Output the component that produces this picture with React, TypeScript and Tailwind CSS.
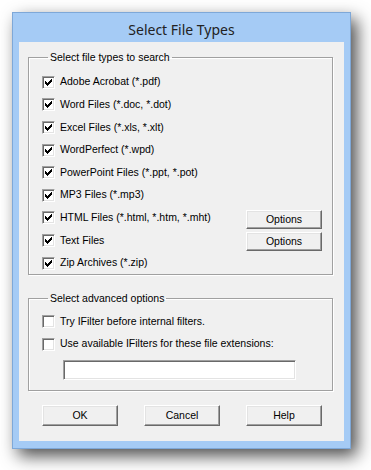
import React from 'react';

const font = { fontFamily: '"Liberation Sans", Arial, sans-serif' };

function Check({ checked }: { checked: boolean }) {
  return (
    <span className="relative block w-[13px] h-[13px] shrink-0 bg-white border border-t-[#a0a0a0] border-l-[#a0a0a0] border-b-white border-r-white shadow-[inset_1px_1px_0_#696969,inset_-1px_-1px_0_#e3e3e3]">
      {checked && (
        <svg width="13" height="13" viewBox="0 0 13 13" className="absolute -left-px -top-px" shapeRendering="crispEdges">
          <path
            fill="#000"
            d="M3 5h1v3H3z M4 6h1v3H4z M5 7h1v3H5z M6 6h1v3H6z M7 5h1v3H7z M8 4h1v3H8z M9 3h1v3H9z"
          />
        </svg>
      )}
    </span>
  );
}

function Button({ label }: { label: string }) {
  return (
    <button className="w-[76px] h-[21px] bg-[#f0f0f0] text-[10.5px] leading-none text-black border border-t-white border-l-white border-b-[#696969] border-r-[#696969] shadow-[inset_-1px_-1px_0_#a0a0a0,inset_1px_1px_0_#e3e3e3]">
      {label}
    </button>
  );
}

function Row({ label, checked, options }: { label: string; checked: boolean; options?: boolean }) {
  return (
    <div className="flex items-center h-[22.6px]">
      <Check checked={checked} />
      <span className="ml-[5px] text-[10.5px] text-black whitespace-nowrap">{label}</span>
      {options && (
        <div className="ml-auto mr-[10px]">
          <button className="w-[76px] h-[19px] bg-[#f0f0f0] text-[10.5px] leading-none text-black border border-t-white border-l-white border-b-[#696969] border-r-[#696969] shadow-[inset_-1px_-1px_0_#a0a0a0,inset_1px_1px_0_#e3e3e3]">
            Options
          </button>
        </div>
      )}
    </div>
  );
}

export default function App() {
  const types = [
    { label: 'Adobe Acrobat (*.pdf)' },
    { label: 'Word Files (*.doc, *.dot)' },
    { label: 'Excel Files (*.xls, *.xlt)' },
    { label: 'WordPerfect (*.wpd)' },
    { label: 'PowerPoint Files (*.ppt, *.pot)' },
    { label: 'MP3 Files (*.mp3)' },
    { label: 'HTML Files (*.html, *.htm, *.mht)', options: true },
    { label: 'Text Files', options: true },
    { label: 'Zip Archives (*.zip)' },
  ];

  return (
    <div className="w-[371px] h-[470px] bg-white pt-[12px] pl-[12px]" style={font}>
      <div className="w-[339px] h-[437px] bg-[#a5cbf5] border border-[#7ea8d8] shadow-[6px_7px_16px_rgba(0,0,0,0.7)] flex flex-col">
        {/* title bar */}
        <div className="h-[29px] flex items-center justify-center pt-[3px]">
          <span className="text-[14px] text-[#222]" style={{ fontFamily: '"Noto Sans", "Open Sans", sans-serif' }}>
            Select File Types
          </span>
        </div>

        {/* client */}
        <div className="mx-[6px] w-[325px] h-[399px] bg-[#f0f0f0] flex flex-col px-[9px] pr-[11px]">
          <fieldset className="mt-[9px] border border-[#a0a0a0] shadow-[inset_1px_1px_0_#fff,1px_1px_0_#fff] pl-[13px] pb-0">
            <legend className="ml-[6px] px-[2px] text-[10.5px] leading-[13px] text-black">Select file types to search</legend>
            <div className="pt-[7px]">
              {types.map((t) => (
                <Row key={t.label} label={t.label} checked options={t.options} />
              ))}
            </div>
          </fieldset>

          <fieldset className="mt-[17px] border border-[#a0a0a0] shadow-[inset_1px_1px_0_#fff,1px_1px_0_#fff] pl-[13px] pb-[10px]">
            <legend className="ml-[6px] px-[2px] text-[10.5px] leading-[13px] text-black">Select advanced options</legend>
            <div className="pt-[5px]">
              <Row label="Try IFilter before internal filters." checked={false} />
              <Row label="Use available IFilters for these file extensions:" checked={false} />
              <input
                type="text"
                className="mt-[4px] ml-[21px] block w-[233px] h-[20px] bg-white outline-none border border-t-[#a0a0a0] border-l-[#a0a0a0] border-b-white border-r-white shadow-[inset_1px_1px_0_#696969,inset_-1px_-1px_0_#e3e3e3]"
              />
            </div>
          </fieldset>

          <div className="mt-[14px] ml-[14px] flex gap-[26px]">
            <Button label="OK" />
            <Button label="Cancel" />
            <Button label="Help" />
          </div>
        </div>
      </div>
    </div>
  );
}
